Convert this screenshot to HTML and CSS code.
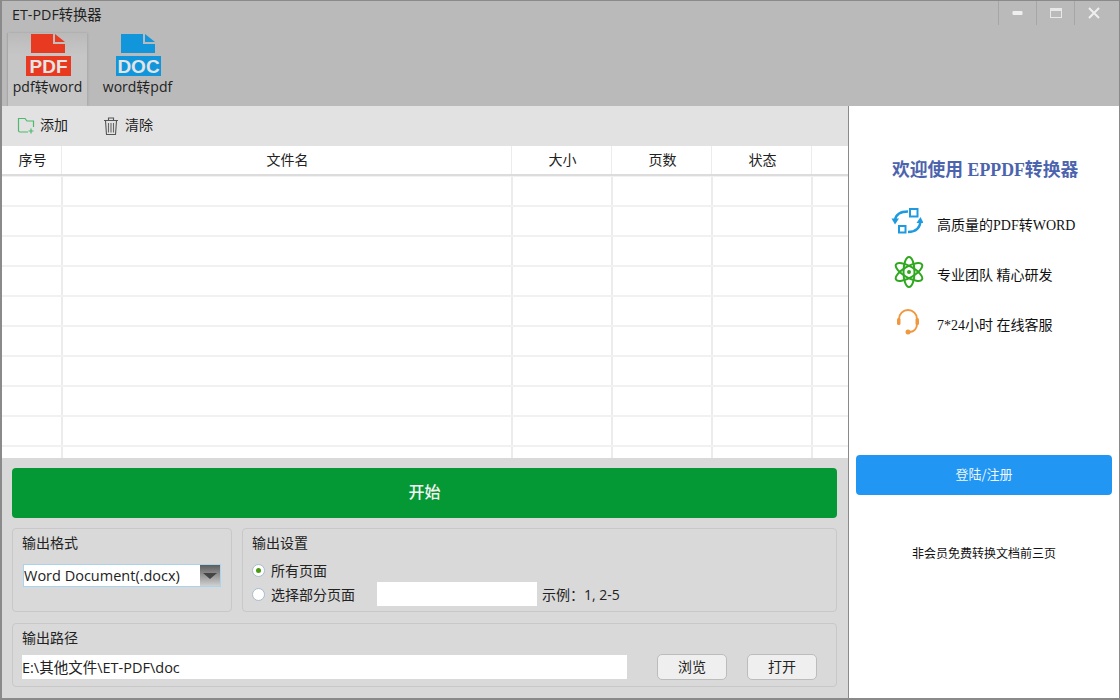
FILE: index.html
```html
<!DOCTYPE html>
<html lang="zh">
<head>
<meta charset="utf-8">
<title>ET-PDF转换器</title>
<link rel="stylesheet" href="styles.css">
</head>
<body>
<div class="window">
  <header class="header">
    <div class="titlebar">
      <div class="title">ET-PDF转换器</div>
      <div class="winbtns">
        <div class="winbtn"><svg width="12" height="12" viewBox="0 0 12 12"><rect x="0.5" y="4" width="10" height="4" rx="1" fill="#efefef"/></svg></div>
        <div class="winbtn"><svg width="12" height="12" viewBox="0 0 12 12"><rect x="0.5" y="1.5" width="11" height="9" fill="none" stroke="#e8e8e8" stroke-width="1"/><rect x="1" y="2" width="10" height="2" fill="#e8e8e8"/></svg></div>
        <div class="winbtn"><svg width="12" height="12" viewBox="0 0 12 12"><path d="M1 1L11 11M11 1L1 11" stroke="#efefef" stroke-width="2"/></svg></div>
      </div>
    </div>
    <nav class="tabs">
      <div class="tab active">
        <svg class="tabicon" width="45" height="43" viewBox="0 0 45 43">
          <path d="M5 0H27V10H39V19H5Z M29 0L39 8H29Z" fill="#e83a20"/>
          <rect x="0" y="22" width="45" height="20" fill="#e83a20"/>
          <text x="22.500" y="39" class="icontext">PDF</text>
        </svg>
        <span class="tablabel">pdf转word</span>
      </div>
      <div class="tab">
        <svg class="tabicon" width="45" height="43" viewBox="0 0 45 43">
          <path d="M5 0H27V10H39V19H5Z M29 0L39 8H29Z" fill="#1296db"/>
          <rect x="0" y="22" width="45" height="20" fill="#1296db"/>
          <text x="22.500" y="39" class="icontext">DOC</text>
        </svg>
        <span class="tablabel">word转pdf</span>
      </div>
    </nav>
  </header>
  <div class="content">
    <main class="main">
      <div class="toolbar">
        <div class="toolbtn">
          <svg class="addicon" width="18" height="18" viewBox="0 0 18 18"><path d="M11 16H3a1.500 1.500 0 0 1-1.500-1.500V2.500H8l2 2.500h6.500V11" fill="none" stroke="#4cb96b" stroke-width="1.200"/><path d="M14 12.500v5M11.500 15h5" stroke="#4cb96b" stroke-width="1.200"/></svg>
          <span class="toollabel">添加</span>
        </div>
        <div class="toolbtn">
          <svg width="16" height="20" viewBox="0 0 16 20"><path d="M1 4.500H15M5.500 4V2H10.500V4M2.500 5L3.500 18.500H12.500L13.500 5" fill="none" stroke="#555" stroke-width="1.100"/><path d="M5.500 7V16.500M8 7V16.500M10.500 7V16.500" stroke="#666" stroke-width="1.100"/></svg>
          <span class="toollabel">清除</span>
        </div>
      </div>
      <div class="table">
        <div class="thead">
          <div>序号</div><div>文件名</div><div>大小</div><div>页数</div><div>状态</div><div></div>
        </div>
        <div class="tbody"></div>
      </div>
      <div class="controls">
        <button class="start">开始</button>
        <div class="settings">
          <section class="group format">
            <div class="legend">输出格式</div>
            <div class="combo"><span class="combotext">Word Document(.docx)</span><span class="comboarrow"></span></div>
          </section>
          <section class="group output">
            <div class="legend">输出设置</div>
            <div class="radiorow"><span class="radio checked"></span><span>所有页面</span></div>
            <div class="radiorow"><span class="radio"></span><span>选择部分页面</span><span class="pageinput"></span><span class="hint">示例：1, 2-5</span></div>
          </section>
        </div>
        <section class="group path">
          <div class="legend">输出路径</div>
          <div class="pathrow">
            <div class="pathinput">E:\其他文件\ET-PDF\doc</div>
            <button class="btn">浏览</button>
            <button class="btn">打开</button>
          </div>
        </section>
      </div>
    </main>
    <aside class="side">
      <h1 class="welcome">欢迎使用 EPPDF转换器</h1>
      <ul class="features">
        <li>
          <svg class="ficon" width="32" height="32" viewBox="0 0 32 32" fill="none" stroke="#1e9be0" stroke-width="2"><rect x="19" y="3" width="7.500" height="7.500"/><rect x="8" y="20" width="6.500" height="6.500"/><path d="M17 5.500C10 5.500 5 8 4 14" stroke-width="2.400"/><path d="M0.500 12.500L8 12.500L4 18.500Z" fill="#1e9be0" stroke="none"/><path d="M17 26C24 26 29 23 29.500 15" stroke-width="2.400"/><path d="M25.500 17L32.500 17L29.500 11Z" fill="#1e9be0" stroke="none"/></svg>
          <span>高质量的PDF转WORD</span>
        </li>
        <li>
          <svg class="ficon atom" width="30" height="32" viewBox="0 0 30 32" fill="none" stroke="#2ea81e" stroke-width="2"><ellipse cx="15" cy="16" rx="5.500" ry="15"/><ellipse cx="15" cy="16" rx="5.500" ry="15" transform="rotate(60 15 16)"/><ellipse cx="15" cy="16" rx="5.500" ry="15" transform="rotate(-60 15 16)"/><circle cx="15" cy="16" r="2" fill="#2ea81e" stroke="none"/></svg>
          <span>专业团队 精心研发</span>
        </li>
        <li>
          <svg class="ficon head" width="28" height="28" viewBox="0 0 28 28" fill="none" stroke="#f0983f" stroke-width="2"><path d="M5 13V11a9 9 0 0 1 18 0v2"/><path d="M23 16c0 4.500-3 7.500-7 8"/><rect x="3" y="10" width="3.500" height="7" rx="1.500" fill="#f0983f" stroke="none"/><rect x="21.500" y="10" width="3.500" height="7" rx="1.500" fill="#f0983f" stroke="none"/><circle cx="14" cy="24" r="2.500" fill="#f0983f" stroke="none"/></svg>
          <span>7*24小时 在线客服</span>
        </li>
      </ul>
      <button class="login">登陆/注册</button>
      <p class="note">非会员免费转换文档前三页</p>
    </aside>
  </div>
</div>
</body>
</html>
```
FILE: styles.css
```css
* { box-sizing: border-box; }
html, body { margin: 0; padding: 0; }
body { width: 1120px; height: 700px; overflow: hidden; font-family: "Open Sans", "Noto Sans CJK SC", sans-serif; color: #222; }
button { font: inherit; }
.window { width: 1120px; height: 700px; display: flex; flex-direction: column; border: 2px solid #8a8a8a; border-width: 1px 1px 2px 2px; background: #bababa; }
.header { height: 105px; flex: none; display: flex; flex-direction: column; background: #bababa; }
.titlebar { height: 28px; flex: none; display: flex; justify-content: space-between; }
.title { font-size: 14.300px; line-height: 27px; padding-left: 10px; color: #222; }
.winbtns { display: flex; margin-right: 7px; height: 24px; }
.winbtn { width: 38px; height: 24px; border-left: 1px solid #a6a6a6; display: flex; align-items: center; justify-content: center; }
.tabs { flex: 1; display: flex; padding-left: 6px; }
.tab { width: 79px; margin-right: 11px; display: flex; flex-direction: column; align-items: center; margin-top: 4px; padding-top: 1px; }
.tab.active { background: linear-gradient(to bottom, #bababa, #c6c6c6 30%, #c6c6c6); box-shadow: -1px 0 1px #a8a8a8, 1px 0 2px #a8a8a8; }
.tabicon { display: block; flex: none; margin-left: 2px; }
.icontext { font-family: "Liberation Sans", sans-serif; font-weight: 700; font-size: 19px; fill: #e4e4e4; text-anchor: middle; }
.tablabel { font-size: 14px; line-height: 20px; white-space: nowrap; color: #222; }
.content { flex: 1; display: flex; min-height: 0; }
.main { width: 846px; flex: none; display: flex; flex-direction: column; background: #d9d9d9; }
.toolbar { height: 40px; flex: none; background: #e2e2e2; display: flex; align-items: center; padding-left: 15px; gap: 35px; font-size: 14px; }
.toolbtn { display: flex; align-items: center; gap: 5px; }
.toolbtn + .toolbtn { gap: 6px; }
.addicon { margin-bottom: 2px; }
.toollabel { margin-bottom: 4px; }
.table { height: 312px; flex: none; background: #fff; display: flex; flex-direction: column; overflow: hidden; }
.thead { height: 30px; flex: none; display: grid; grid-template-columns: 60px 450px 100px 100px 100px 36px; border-bottom: 2px solid #dcdcdc; font-size: 14px; }
.thead > div { text-align: center; line-height: 28px; padding-left: 2px; border-right: 1px solid #ececec; }
.thead > div:last-child { border-right: 0; }
.tbody { flex: 1; background-color: #fff; background-image:
  linear-gradient(to bottom, transparent 28px, #f1f1f1 28px, #f1f1f1 30px),
  linear-gradient(to right, transparent 59px, #ececec 59px, #ececec 61px, transparent 61px, transparent 509px, #ececec 509px, #ececec 511px, transparent 511px, transparent 609px, #ececec 609px, #ececec 611px, transparent 611px, transparent 709px, #ececec 709px, #ececec 711px, transparent 711px, transparent 809px, #ececec 809px, #ececec 811px, transparent 811px);
  background-size: 100% 30px, 100% 100%; background-position: 0 1px, 0 0; }
.controls { flex: 1; padding: 10px 11px 10px 10px; display: flex; flex-direction: column; }
.start { height: 50px; width: 825px; flex: none; padding: 0 0 4px; background: #059935; color: #f4f4f4; border: 0; border-radius: 4px; font-size: 16px; font-weight: 500; }
.settings { display: flex; gap: 10px; margin-top: 10px; height: 84px; flex: none; }
.group { border: 1px solid #c8c8c8; border-radius: 4px; background: #d9d9d9; padding: 4px 9px; font-size: 14px; }
.legend { line-height: 20px; color: #222; }
.format { width: 220px; flex: none; }
.output { flex: 1; }
.combo { display: flex; width: 198px; height: 23px; margin: 11px 0 0 1px; background: #fff; border: 1px solid #a8d4ee; align-items: center; }
.combotext { flex: 1; font-size: 14.500px; padding-left: 0; white-space: nowrap; }
.comboarrow { width: 20px; height: 21px; position: relative; background: linear-gradient(to bottom, #5c5c5c, #d0d0d0); }
.comboarrow::after { content: ""; position: absolute; left: 3px; top: 8px; border-style: solid; border-width: 6px 7px 0; border-color: #444 transparent transparent; }
.radiorow { display: flex; align-items: center; height: 24px; }
.legend + .radiorow { margin-top: 5px; }
.radio { width: 13px; height: 13px; border-radius: 50%; background: #fff; border: 1px solid #a9bccb; margin-right: 6px; position: relative; flex: none; }
.radio.checked::after { content: ""; position: absolute; left: 3px; top: 3px; width: 5px; height: 5px; border-radius: 50%; background: #4a9a10; }
.pageinput { width: 160px; height: 24px; background: #fff; margin-left: 22px; margin-right: 5px; }
.hint { white-space: nowrap; }
.path { height: 64px; margin-top: 11px; flex: none; }
.pathrow { display: flex; align-items: center; margin-top: 6px; }
.pathinput { width: 605px; height: 24px; background: #fff; line-height: 25px; font-size: 14.500px; color: #222; white-space: nowrap; }
.btn { width: 70px; height: 26px; margin-left: 30px; padding: 0 0 3px; background: #efefef; border: 1px solid #bcbcbc; border-radius: 5px; font-size: 14px; color: #222; }
.btn + .btn { margin-left: 20px; }
.side { flex: 1; background: #fff; border-left: 1px solid #8a8a8a; display: flex; flex-direction: column; font-family: "Liberation Serif", "Noto Sans CJK SC", serif; color: #111; padding: 0; }
.welcome { margin: 52px 0 0 43px; font-size: 17.800px; line-height: 24px; font-weight: 700; color: #4c64ae; white-space: nowrap; }
.features { list-style: none; margin: 17px 0 0 42px; padding: 0; font-size: 14px; }
.features li { height: 50px; display: flex; align-items: center; white-space: nowrap; }
.ficon { width: 32px; flex: none; margin-right: 14px; margin-bottom: 5px; }
.ficon.atom { width: 30px; margin-left: 3px; margin-right: 13px; }
.ficon.head { width: 28px; margin-left: 3px; margin-right: 15px; }
.login { margin: 106px 7px 0 7px; height: 40px; padding: 0 0 4px; background: #2196f3; color: #eef6fd; border: 0; border-radius: 4px; font-family: "Noto Sans CJK SC", sans-serif; font-size: 13px; flex: none; }
.note { margin: 49px 0 0 0; font-size: 12px; line-height: 18px; text-align: center; font-family: "Noto Sans CJK SC", sans-serif; color: #111; }
```
